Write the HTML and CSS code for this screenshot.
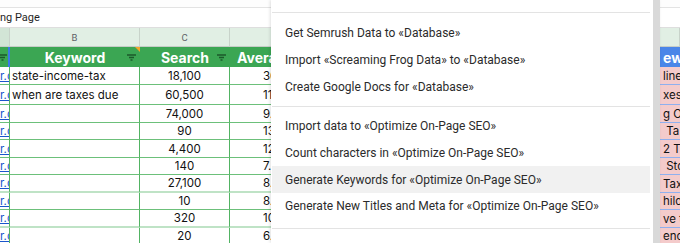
FILE: index.html
```html
<!DOCTYPE html>
<html>
<head>
<meta charset="utf-8">
<link rel="stylesheet" href="styles.css">
</head>
<body>
<div class="sheet">
  <div class="toolbar"></div>
  <div class="fbar"><span class="ftext">ng Page</span></div>
  <div class="grid">
    <div class="cl cl-a"></div><div class="cl">B</div><div class="cl">C</div><div class="cl">D</div><div class="cl">E</div><div class="cl"></div>

    <div class="hd hd-a"><svg class="flt" width="9" height="7" viewBox="0 0 9 7"><path d="M0 1h9M2 3.5h5M3.5 6h2"/></svg></div>
    <div class="hd hd-b"><span></span><span>Keyword</span><svg class="flt" width="9" height="7" viewBox="0 0 9 7"><path d="M0 1h9M2 3.5h5M3.5 6h2"/></svg><i class="note"></i></div>
    <div class="hd"><span></span><span>Search</span><svg class="flt" width="9" height="7" viewBox="0 0 9 7"><path d="M0 1h9M2 3.5h5M3.5 6h2"/></svg></div>
    <div class="hd hd-d">Average</div>
    <div class="hd"></div>
    <div class="hd hd-f">ew</div>

    <div class="c a"><u>r.c</u></div><div class="c b">state-income-tax</div><div class="c n">18,100</div><div class="c d">36.12</div><div class="c e"></div><div class="c f">line</div>
    <div class="c a"><u>r.c</u></div><div class="c b">when are taxes due</div><div class="c n">60,500</div><div class="c d">11.59</div><div class="c e"></div><div class="c f">xes</div>
    <div class="c a"><u>r.c</u></div><div class="c b"></div><div class="c n">74,000</div><div class="c d">9.74</div><div class="c e"></div><div class="c f">g O</div>
    <div class="c a"><u>r.c</u></div><div class="c b"></div><div class="c n">90</div><div class="c d">13.25</div><div class="c e"></div><div class="c f"> Ta</div>
    <div class="c a"><u>r.c</u></div><div class="c b"></div><div class="c n">4,400</div><div class="c d">12.03</div><div class="c e"></div><div class="c f">2 T</div>
    <div class="c a"><u>r.c</u></div><div class="c b"></div><div class="c n">140</div><div class="c d">7.61</div><div class="c e"></div><div class="c f"> Sto</div>
    <div class="c a pl"><u>r.c</u></div><div class="c b pl"></div><div class="c n pl">27,100</div><div class="c d pl">8.44</div><div class="c e"></div><div class="c f">Tax</div>
    <div class="c a"><u>r.c</u></div><div class="c b"></div><div class="c n">10</div><div class="c d">8.9</div><div class="c e"></div><div class="c f">hild</div>
    <div class="c a pl"><u>r.c</u></div><div class="c b pl"></div><div class="c n pl">320</div><div class="c d pl">10.51</div><div class="c e"></div><div class="c f">ve t</div>
    <div class="c a"><u>r.c</u></div><div class="c b"></div><div class="c n">20</div><div class="c d">6.35</div><div class="c e"></div><div class="c f">enc</div>
  </div>

  <div class="menu">
    <div class="menu-list">
      <div class="sep sep-first"></div>
      <div class="item">Get Semrush Data to «Database»</div>
      <div class="item">Import «Screaming Frog Data» to «Database»</div>
      <div class="item">Create Google Docs for «Database»</div>
      <div class="sep"></div>
      <div class="item">Import data to «Optimize On-Page SEO»</div>
      <div class="item">Count characters in «Optimize On-Page SEO»</div>
      <div class="item hl">Generate Keywords for «Optimize On-Page SEO»</div>
      <div class="item">Generate New Titles and Meta for «Optimize On-Page SEO»</div>
      <div class="sep sep-last"></div>
    </div>
    <div class="scroll"></div>
  </div>
</div>
</body>
</html>
```

FILE: styles.css
```css
* { box-sizing: border-box; margin: 0; padding: 0; }
html, body { width: 680px; height: 243px; overflow: hidden; background: #fff; }
body { font-family: Inter, "Noto Sans", sans-serif; }

.sheet { position: relative; width: 680px; height: 243px; overflow: hidden; }

.toolbar { height: 8px; border-bottom: 1px solid #e3e3e3; background: #fdfdfd; }
.fbar {
  height: 20px; border-bottom: 1px solid #dedede;
  display: flex; align-items: center;
  font-family: Roboto, "Liberation Sans", sans-serif; font-size: 11px; color: #1f1f1f;
}

.grid {
  display: grid;
  grid-template-columns: 10px 130px 90px 90px 340px 20px;
  grid-template-rows: 19px 20px 18px 20px 18px 17px 18px 17px 18px 17px 18px 17px;
}

.cl {
  background: #e1efe4; border-right: 1px solid #c8d3ca; border-bottom: 1px solid #c6cdc7;
  display: flex; align-items: center; justify-content: center;
  font-family: Roboto, sans-serif; font-size: 9.5px; color: #5f6368;
}
.cl-a { background: #d2e5d6; }

.hd {
  background: #3ba653; color: #fff; font-weight: 700; font-size: 14px;
  display: grid; grid-template-columns: 1fr auto 1fr; align-items: center;
  white-space: nowrap; overflow: hidden; position: relative;
}
.hd .flt { justify-self: end; margin-right: 4px; }
.flt path { stroke: #1c5a2b; stroke-width: 1.3; fill: none; }
.hd-a { display: flex; justify-content: flex-end; border-right: 2px solid #3b78e7; }
.hd-a .flt { margin-right: 1px; flex: none; }
.hd-d { display: flex; padding-left: 7px; }
.hd-f { display: flex; padding-left: 3px; background: #4a86e8; }
.note {
  position: absolute; top: 0; right: 0; width: 0; height: 0;
  border-top: 5px solid #f2a62c; border-left: 5px solid transparent;
}

.c {
  border-right: 1px solid #52b363; border-bottom: 1px solid #6cc07a;
  display: flex; align-items: center; overflow: hidden; white-space: pre;
  font-size: 11.5px; color: #111;
}
.c.pl { border-bottom: 2px solid #bfe3c6; }
.a u { color: #1a55cc; text-decoration: underline; }
.b { padding-left: 2px; }
.n { justify-content: center; }
.d { padding-left: 33px; }
.e { border-right: 1px solid #6d9eeb; border-bottom: none; }
.f { background: #f4cbcb; border-right: none; border-bottom: 1px solid #8fb0ef; padding-left: 3px; }

.menu {
  position: absolute; left: 271px; top: 0; width: 389px; height: 243px;
  background: #fff; display: flex;
  box-shadow: -1px 0 3px rgba(0, 0, 0, 0.12);
}
.menu-list { flex: 1; padding: 6px 3px 0 1px; }
.scroll { width: 7px; background: #d9d9d9; }
.sep { height: 1px; background: #e3e3e3; margin: 6px 0; }
.sep-first { margin: 6px 0 7px; }
.sep-last { margin-top: 8px; }
.item {
  height: 26.667px; display: flex; align-items: center; padding-left: 13px;
  font-family: Roboto, "Liberation Sans", sans-serif; font-size: 12px; color: #2b2b2b;
  white-space: nowrap;
}
.item.hl { background: #f1f1f1; }
```
